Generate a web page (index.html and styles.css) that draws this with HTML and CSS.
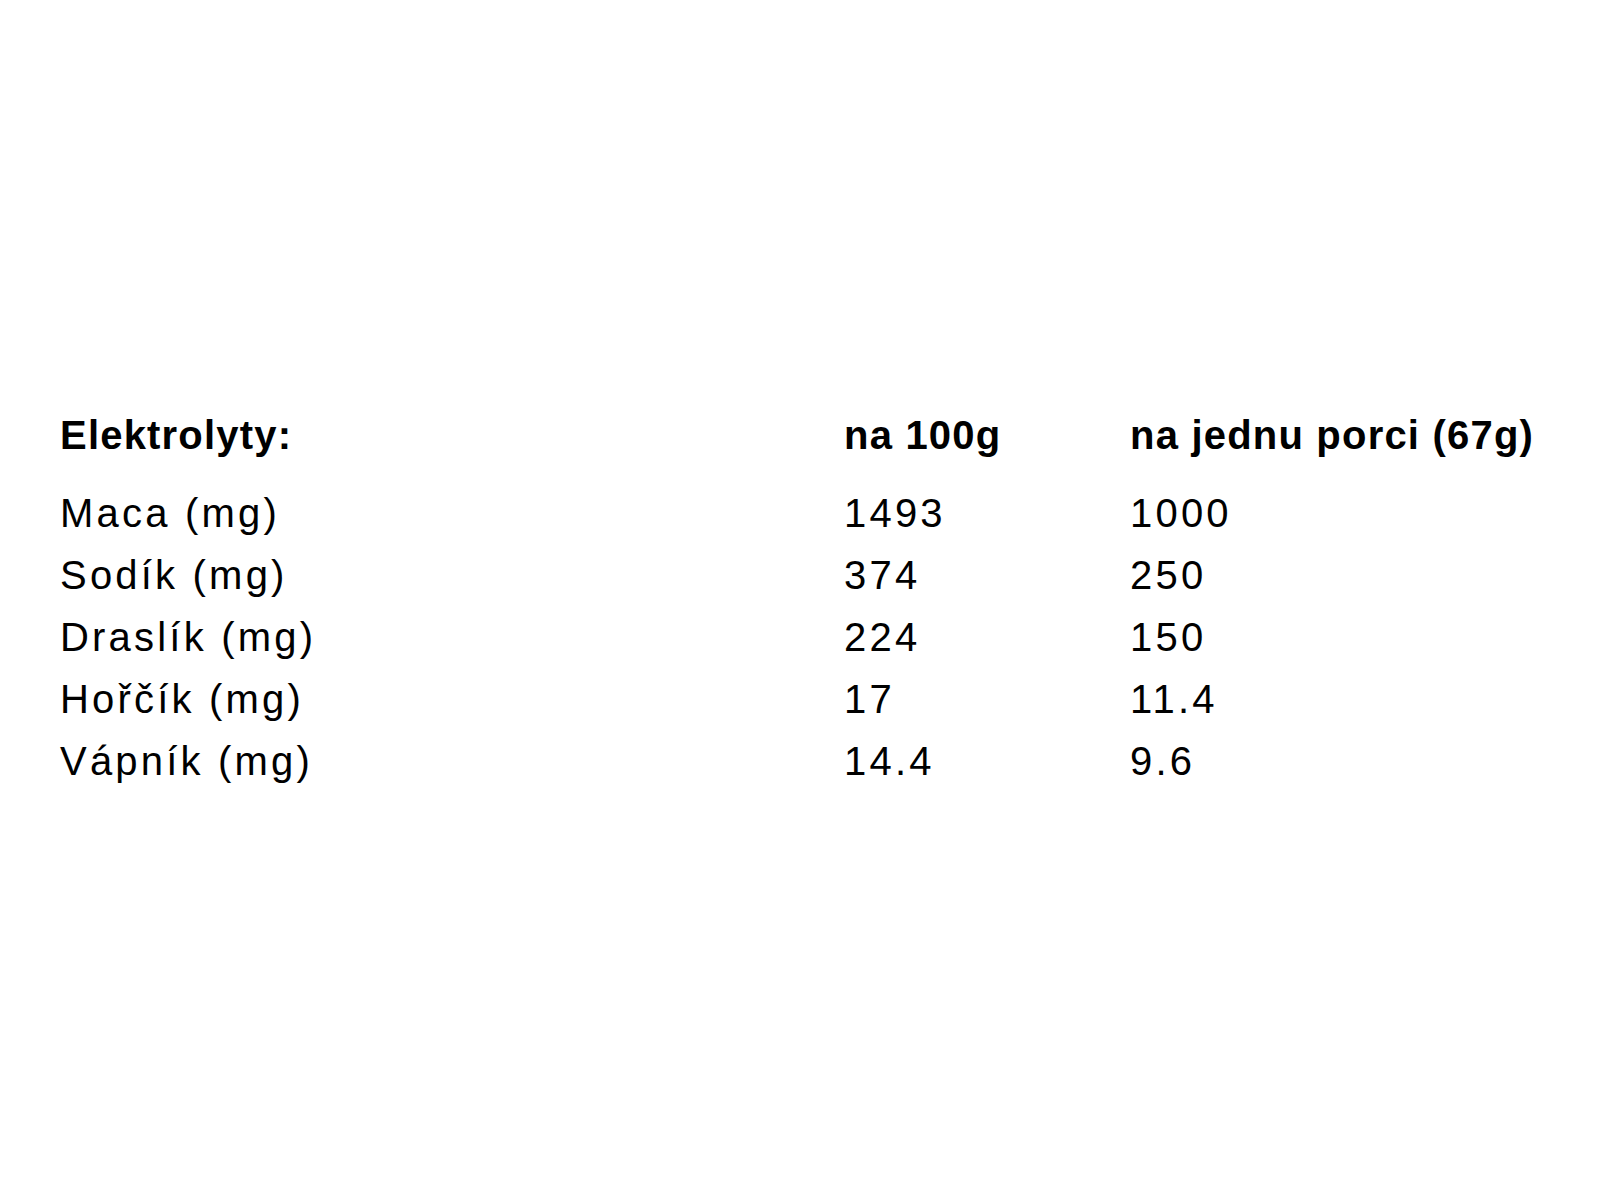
FILE: index.html
```html
<!DOCTYPE html>
<html lang="cs">
<head>
<meta charset="utf-8">
<title>Elektrolyty</title>
<link rel="stylesheet" href="styles.css">
</head>
<body>
<main class="page">
  <div class="table">
    <div class="row head">
      <div class="cell">Elektrolyty:</div>
      <div class="cell">na 100g</div>
      <div class="cell">na jednu porci (67g)</div>
    </div>
    <div class="row">
      <div class="cell">Maca (mg)</div>
      <div class="cell">1493</div>
      <div class="cell">1000</div>
    </div>
    <div class="row">
      <div class="cell">Sodík (mg)</div>
      <div class="cell">374</div>
      <div class="cell">250</div>
    </div>
    <div class="row">
      <div class="cell">Draslík (mg)</div>
      <div class="cell">224</div>
      <div class="cell">150</div>
    </div>
    <div class="row">
      <div class="cell">Hořčík (mg)</div>
      <div class="cell">17</div>
      <div class="cell">11.4</div>
    </div>
    <div class="row">
      <div class="cell">Vápník (mg)</div>
      <div class="cell">14.4</div>
      <div class="cell">9.6</div>
    </div>
  </div>
</main>
</body>
</html>
```

FILE: styles.css
```css
html, body {
  margin: 0;
  padding: 0;
  background: #ffffff;
}

.page {
  width: 1600px;
  height: 1200px;
  box-sizing: border-box;
  padding: 404px 0 0 60px;
  font-family: "Liberation Sans", Arial, sans-serif;
  color: #000000;
}

.table {
  display: flex;
  flex-direction: column;
}

.row {
  display: grid;
  grid-template-columns: 784px 286px auto;
  font-size: 40px;
  line-height: 62px;
  letter-spacing: 3.2px;
  white-space: nowrap;
}

.row.head {
  font-weight: 700;
  letter-spacing: 1.2px;
  margin-bottom: 16px;
}
```
